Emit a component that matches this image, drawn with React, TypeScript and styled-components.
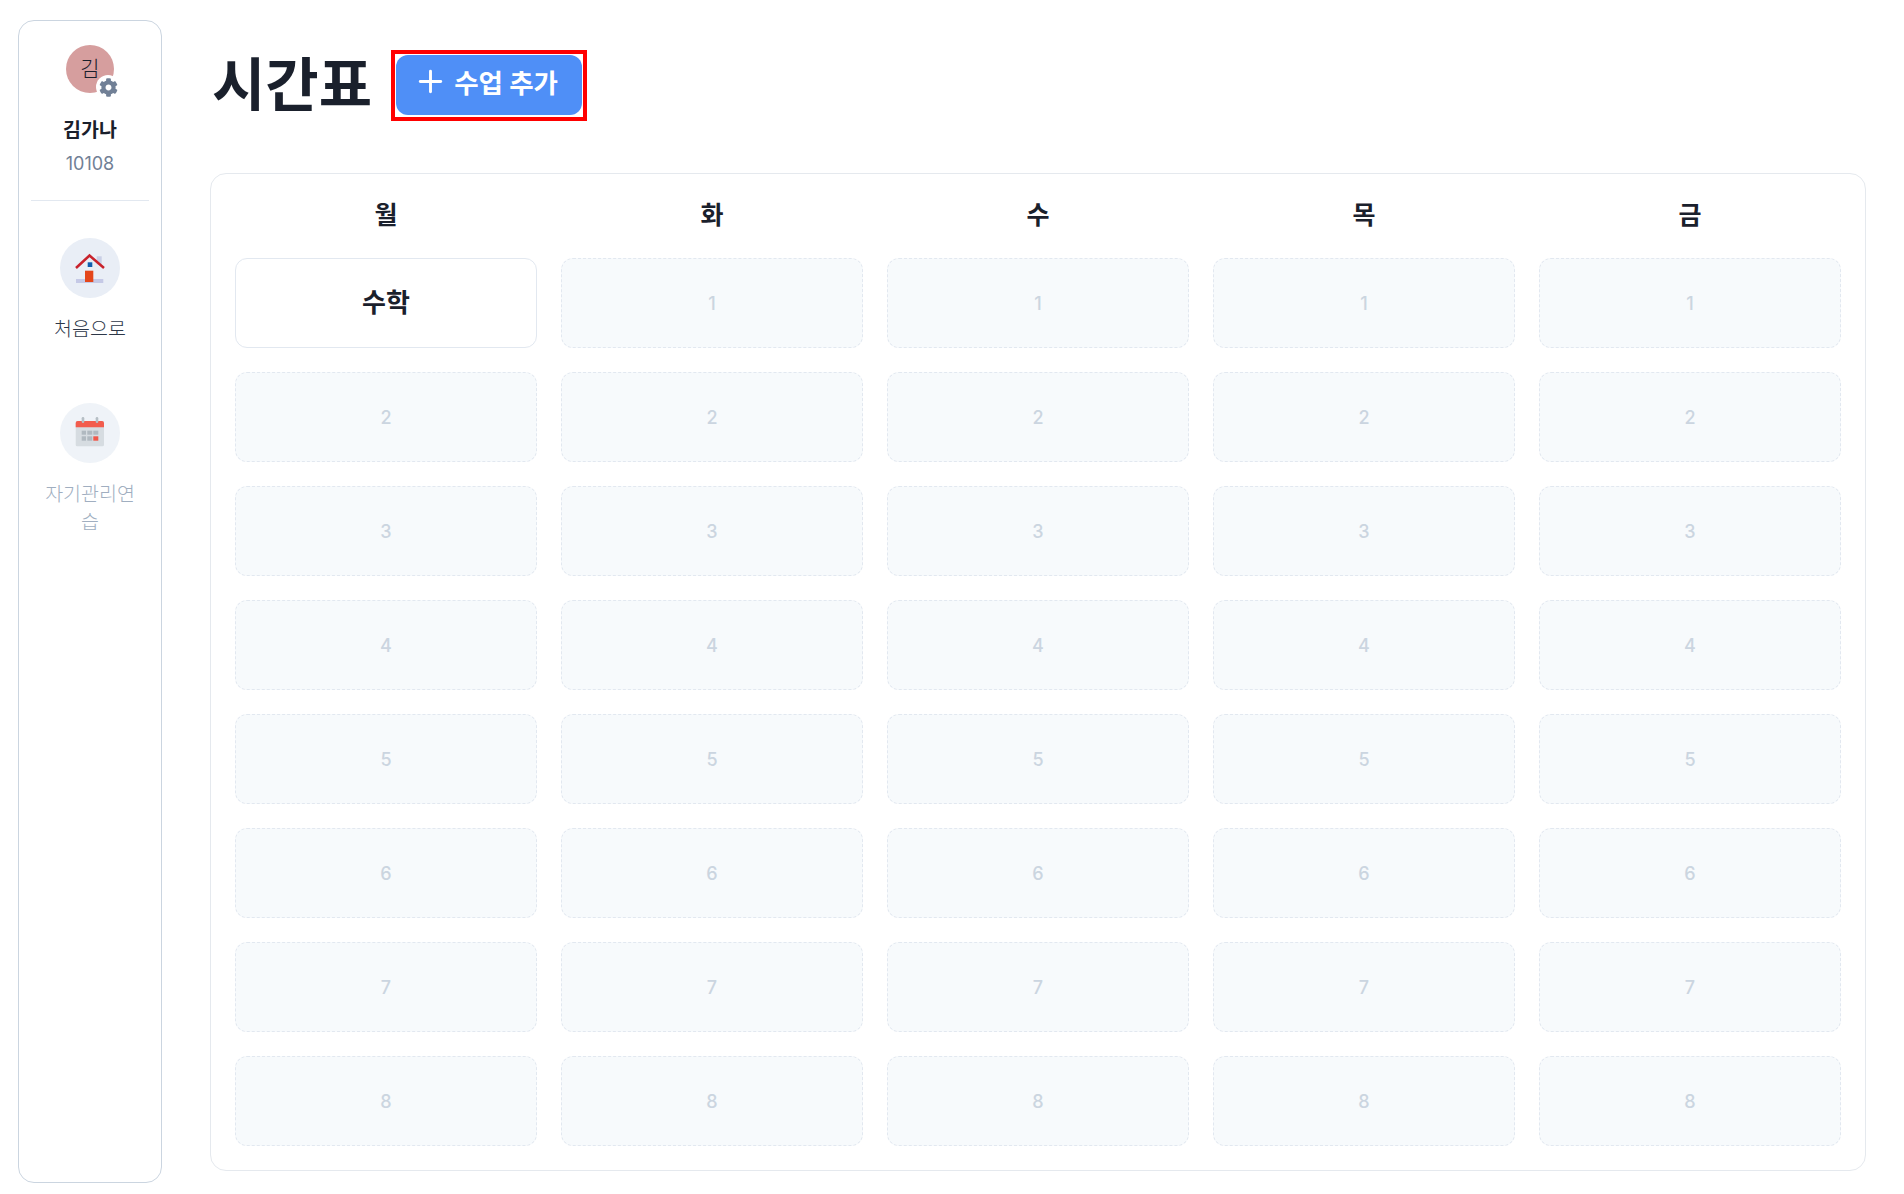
import React from "react"
import styled, { createGlobalStyle } from "styled-components"
import { Plus } from "lucide-react"
import { FaCog } from "react-icons/fa"

const days = ["월", "화", "수", "목", "금"]
const periods = [1, 2, 3, 4, 5, 6, 7, 8]
const classes: Record<string, string> = { "월-1": "수학" }

function HomeIcon() {
  return (
    <svg width="30" height="32" viewBox="0 0 30 32">
      <rect x="21.700" y="4.300" width="5" height="8" fill="#c9cfe6" />
      <rect x="1" y="27" width="27.300" height="4" fill="#c5c9e6" />
      <rect x="12.700" y="10.300" width="4.600" height="4.700" fill="#0f5fb0" />
      <rect x="10" y="18.700" width="8.300" height="11.300" fill="#e4461a" />
      <path d="M1 16 L14.500 3.500 L29 16" fill="none" stroke="#c8222c" strokeWidth="2.500" />
    </svg>
  )
}

function CalendarIcon() {
  return (
    <svg width="30" height="32" viewBox="0 0 30 32">
      <rect x="0.700" y="4" width="28.300" height="25.300" rx="1.500" fill="#cfd6dc" />
      <path d="M.7 10.300V6a2 2 0 0 1 2-2H27a2 2 0 0 1 2 2v4.300z" fill="#f0402f" />
      <rect x="6.700" y="0" width="2.600" height="6" rx="1.300" fill="#aab4bc" />
      <rect x="20.700" y="0" width="2.600" height="6" rx="1.300" fill="#aab4bc" />
      <g fill="#a3adb6">
        <rect x="6.700" y="13.700" width="4.300" height="4" />
        <rect x="12.300" y="13.700" width="5" height="4" />
        <rect x="18.300" y="13.700" width="5" height="4" />
        <rect x="6.700" y="19.300" width="4.300" height="4.400" />
        <rect x="12.300" y="19.300" width="5" height="4.400" />
      </g>
      <rect x="18.300" y="19.300" width="5" height="4.400" fill="#ee3b2c" />
    </svg>
  )
}

export default function App() {
  return (
    <>
      <GlobalStyle />
      <Page>
        <Sidebar>
          <AvatarWrap>
            <Avatar>김</Avatar>
            <GearBadge>
              <FaCog size={19} color="#718096" />
            </GearBadge>
          </AvatarWrap>
          <UserName>김가나</UserName>
          <UserId>10108</UserId>
          <Divider />
          <NavItem>
            <NavCircle>
              <HomeIcon />
            </NavCircle>
            <NavLabel>처음으로</NavLabel>
          </NavItem>
          <NavItem>
            <NavCircle $muted>
              <CalendarIcon />
            </NavCircle>
            <NavLabel $muted>자기관리연습</NavLabel>
          </NavItem>
        </Sidebar>
        <Main>
          <Header>
            <Title>시간표</Title>
            <Highlight>
              <AddButton>
                <Plus size={35} strokeWidth={2} />
                수업 추가
              </AddButton>
            </Highlight>
          </Header>
          <Panel>
            <Grid>
              {days.map((day) => (
                <DayHead key={day}>{day}</DayHead>
              ))}
              {periods.map((period) =>
                days.map((day) => {
                  const name = classes[`${day}-${period}`]
                  return name ? (
                    <FilledCell key={day + period}>{name}</FilledCell>
                  ) : (
                    <EmptyCell key={day + period}>{period}</EmptyCell>
                  )
                })
              )}
            </Grid>
          </Panel>
        </Main>
      </Page>
    </>
  )
}

const GlobalStyle = createGlobalStyle`
  * {
    box-sizing: border-box;
  }
  body {
    margin: 0;
    background: #ffffff;
    color: #1a202c;
    font-family: Inter, "Noto Sans CJK KR", sans-serif;
  }
`

const Page = styled.div`
  display: flex;
  height: 1194px;
  padding: 20px 38px 11px 18px;
`

const Sidebar = styled.aside`
  width: 144px;
  flex-shrink: 0;
  display: flex;
  flex-direction: column;
  align-items: center;
  padding: 24px 12px;
  border: 1px solid #cbd5e0;
  border-radius: 16px;
`

const AvatarWrap = styled.div`
  position: relative;
  width: 48px;
  height: 48px;
`

const Avatar = styled.div`
  width: 48px;
  height: 48px;
  padding-bottom: 4px;
  border-radius: 50%;
  background: #d69e9e;
  display: flex;
  align-items: center;
  justify-content: center;
  font-size: 21px;
  font-weight: 300;
`

const GearBadge = styled.div`
  position: absolute;
  right: -6px;
  bottom: -6px;
  width: 24px;
  height: 24px;
  border-radius: 50%;
  background: #ffffff;
  display: flex;
  align-items: center;
  justify-content: center;
`

const UserName = styled.div`
  margin-top: 23px;
  font-size: 19.500px;
  font-weight: 700;
  line-height: 28px;
`

const UserId = styled.div`
  margin-top: 6px;
  font-size: 18px;
  line-height: 28px;
  color: #718096;
`

const Divider = styled.hr`
  width: 100%;
  margin: 22px 0 37px;
  border: 0;
  border-top: 1px solid #e2e8f0;
`

const NavItem = styled.div`
  width: 100%;
  display: flex;
  flex-direction: column;
  align-items: center;
  margin-bottom: 60px;
`

const NavCircle = styled.div<{ $muted?: boolean }>`
  width: 60px;
  height: 60px;
  border-radius: 50%;
  background: ${(p) => (p.$muted ? "#edf2f7" : "#e9eef6")};
  display: flex;
  align-items: center;
  justify-content: center;
  opacity: ${(p) => (p.$muted ? 0.85 : 1)};
`

const NavLabel = styled.div<{ $muted?: boolean }>`
  width: 96px;
  margin-top: 17px;
  font-size: 19.500px;
  font-weight: 300;
  line-height: 28px;
  text-align: center;
  word-break: break-all;
  color: ${(p) => (p.$muted ? "#a0aec0" : "#2d3748")};
`

const Main = styled.main`
  flex: 1;
  min-width: 0;
  margin-left: 48px;
  padding-bottom: 12px;
  display: flex;
  flex-direction: column;
`

const Header = styled.header`
  display: flex;
  align-items: center;
  gap: 19px;
  height: 130px;
  margin: 0 0 23px 2px;
`

const Title = styled.h1`
  margin: 0;
  font-size: 58px;
  font-weight: 700;
  line-height: 1;
`

const Highlight = styled.div`
  padding: 1px 1px 2px;
  border: 4px solid #ff0000;
`

const AddButton = styled.button`
  width: 186px;
  height: 60px;
  display: flex;
  align-items: center;
  justify-content: center;
  gap: 6px;
  padding: 0 7px 6px 0;
  border: 0;
  border-radius: 12px;
  background: #4f8ff7;
  color: #ffffff;
  font-family: inherit;
  font-size: 26.500px;
  font-weight: 700;
`

const Panel = styled.section`
  flex: 1;
  padding: 24px;
  border: 1px solid #e5e9ee;
  border-radius: 16px;
`

const Grid = styled.div`
  display: grid;
  grid-template-columns: repeat(5, 1fr);
  grid-auto-rows: 90px;
  grid-template-rows: 36px;
  gap: 24px;
`

const DayHead = styled.div`
  padding-top: 1px;
  text-align: center;
  font-size: 25px;
  font-weight: 700;
  line-height: 32px;
`

const FilledCell = styled.div`
  display: flex;
  align-items: center;
  justify-content: center;
  padding-bottom: 6px;
  border: 1px solid #e2e8f0;
  border-radius: 12px;
  background: #ffffff;
  font-size: 26px;
  font-weight: 700;
`

const EmptyCell = styled.div`
  display: flex;
  align-items: center;
  justify-content: center;
  border: 1px dashed #e2e8f0;
  border-radius: 12px;
  background: #f7fafc;
  color: #cbd5e0;
  font-size: 18px;
  font-weight: 500;
`
